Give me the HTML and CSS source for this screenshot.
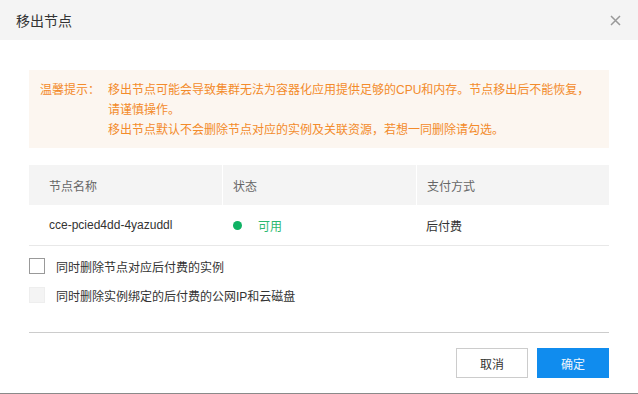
FILE: index.html
```html
<!doctype html>
<html lang="zh">
<head>
  <meta charset="utf-8">
  <title>移出节点</title>
  <link rel="stylesheet" href="styles.css">
</head>
<body>
  <div class="dialog">
    <div class="dialog__head">
      <span class="dialog__title">移出节点</span>
      <svg class="dialog__close" width="11" height="11" viewBox="0 0 11 11">
        <path d="M1 1L10 10M10 1L1 10" stroke="#999" stroke-width="1.5" fill="none"/>
      </svg>
    </div>

    <div class="dialog__body">
      <div class="tip">
        <div class="tip__label">温馨提示：</div>
        <div class="tip__text">
          <p>移出节点可能会导致集群无法为容器化应用提供足够的CPU和内存。节点移出后不能恢复，请谨慎操作。</p>
          <p>移出节点默认不会删除节点对应的实例及关联资源，若想一同删除请勾选。</p>
        </div>
      </div>

      <div class="table">
        <div class="table__row table__row--head">
          <div class="table__cell table__cell--first">节点名称</div>
          <div class="table__cell">状态</div>
          <div class="table__cell">支付方式</div>
        </div>
        <div class="table__row">
          <div class="table__cell table__cell--first">cce-pcied4dd-4yazuddl</div>
          <div class="table__cell"><span class="status"><i class="status__dot"></i>可用</span></div>
          <div class="table__cell">后付费</div>
        </div>
      </div>

      <label class="check">
        <span class="check__box"></span>同时删除节点对应后付费的实例
      </label>
      <label class="check check--disabled">
        <span class="check__box"></span>同时删除实例绑定的后付费的公网IP和云磁盘
      </label>
    </div>

    <div class="dialog__foot">
      <button class="btn">取消</button>
      <button class="btn btn--primary">确定</button>
    </div>
  </div>
</body>
</html>
```

FILE: styles.css
```css
html, body {
  margin: 0;
  background: #fff;
}

body {
  font-family: "Liberation Sans", "Noto Sans CJK SC", sans-serif;
  font-size: 12px;
  color: #333;
}

.dialog {
  width: 638px;
  height: 394px;
  box-sizing: border-box;
  border-bottom: 1px solid #8a8a8a;
  display: flex;
  flex-direction: column;
}

.dialog__head {
  height: 40px;
  background: #f4f4f4;
  display: flex;
  align-items: center;
  justify-content: space-between;
  padding: 0 17px 0 16px;
}

.dialog__title {
  font-size: 14px;
  color: #333;
}

.dialog__body {
  padding: 30px 29px 0;
}

.tip {
  background: #fcf6f0;
  color: #f38b2b;
  display: flex;
  padding: 10px 11px 8px;
  line-height: 20px;
}

.tip__label {
  width: 68px;
  flex: none;
}

.tip__text p {
  margin: 0;
}

.table {
  margin-top: 17px;
}

.table__row {
  display: grid;
  grid-template-columns: 193px 194px 193px;
  height: 40px;
  border-bottom: 1px solid #e8e8e8;
}

.table__row--head {
  background: #f4f4f4;
  color: #666;
  border-bottom: none;
}

.table__cell {
  display: flex;
  align-items: center;
  padding-left: 10px;
}

.table__row--head .table__cell + .table__cell {
  border-left: 1px solid #fff;
}

.table__cell--first {
  padding-left: 20px;
}

.status {
  display: flex;
  align-items: center;
  color: #2cb870;
}

.status__dot {
  width: 9px;
  height: 9px;
  border-radius: 50%;
  background: #0fb264;
  margin: 0 16px 0 1px;
}

.check {
  display: flex;
  align-items: center;
  height: 16px;
  margin-top: 12px;
  color: #333;
}

.check + .check {
  margin-top: 13px;
}

.check__box {
  width: 14px;
  height: 14px;
  border: 1px solid #999;
  margin-right: 11px;
  background: #fff;
}

.check--disabled .check__box {
  border-color: #eee;
  background: #f4f4f4;
}

.dialog__foot {
  margin: auto 29px 15px;
  border-top: 1px solid #ccc;
  padding-top: 15px;
  display: flex;
  justify-content: flex-end;
  gap: 9px;
}

.btn {
  width: 72px;
  height: 30px;
  border: 1px solid #ccc;
  background: #fff;
  font: inherit;
  font-size: 12px;
  color: #333;
}

.btn--primary {
  background: #108cee;
  border-color: #108cee;
  color: #eef6fd;
}
```
